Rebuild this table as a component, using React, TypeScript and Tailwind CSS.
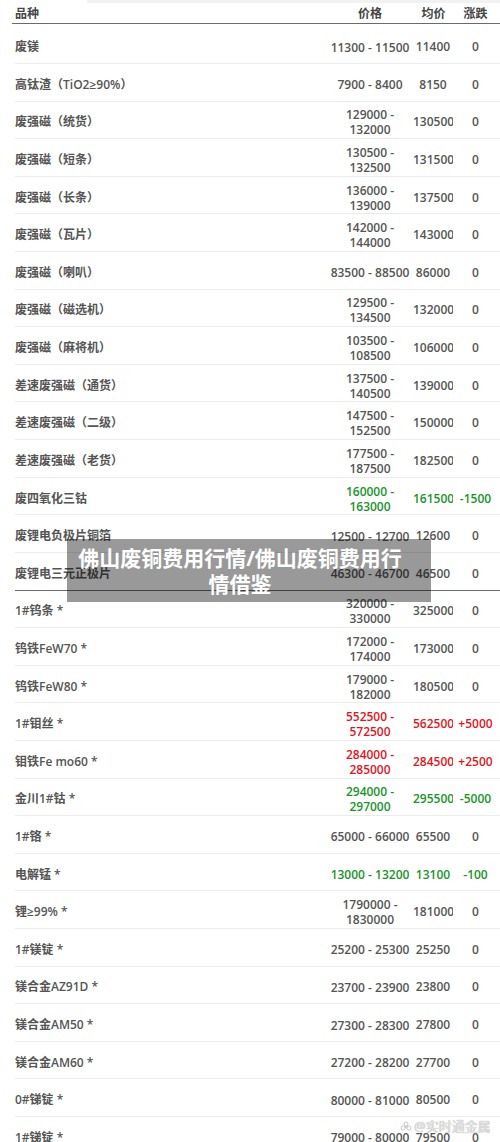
import React from 'react'

type Row = { name: string; price: string; avg: string; chg: string; tone?: 'up' | 'down'; strong?: boolean }

const rows: Row[] = [
  { name: '废镁', price: '11300 - 11500', avg: '11400', chg: '0' },
  { name: '高钛渣（TiO2≥90%）', price: '7900 - 8400', avg: '8150', chg: '0' },
  { name: '废强磁（统货）', price: '129000 - 132000', avg: '130500', chg: '0' },
  { name: '废强磁（短条）', price: '130500 - 132500', avg: '131500', chg: '0' },
  { name: '废强磁（长条）', price: '136000 - 139000', avg: '137500', chg: '0' },
  { name: '废强磁（瓦片）', price: '142000 - 144000', avg: '143000', chg: '0' },
  { name: '废强磁（喇叭）', price: '83500 - 88500', avg: '86000', chg: '0' },
  { name: '废强磁（磁选机）', price: '129500 - 134500', avg: '132000', chg: '0' },
  { name: '废强磁（麻将机）', price: '103500 - 108500', avg: '106000', chg: '0' },
  { name: '差速废强磁（通货）', price: '137500 - 140500', avg: '139000', chg: '0' },
  { name: '差速废强磁（二级）', price: '147500 - 152500', avg: '150000', chg: '0' },
  { name: '差速废强磁（老货）', price: '177500 - 187500', avg: '182500', chg: '0' },
  { name: '废四氧化三钴', price: '160000 - 163000', avg: '161500', chg: '-1500', tone: 'down' },
  { name: '废锂电负极片铜箔', price: '12500 - 12700', avg: '12600', chg: '0' },
  { name: '废锂电三元正极片', price: '46300 - 46700', avg: '46500', chg: '0', strong: true },
  { name: '1#钨条 *', price: '320000 - 330000', avg: '325000', chg: '0' },
  { name: '钨铁FeW70 *', price: '172000 - 174000', avg: '173000', chg: '0' },
  { name: '钨铁FeW80 *', price: '179000 - 182000', avg: '180500', chg: '0' },
  { name: '1#钼丝 *', price: '552500 - 572500', avg: '562500', chg: '+5000', tone: 'up' },
  { name: '钼铁Fe mo60 *', price: '284000 - 285000', avg: '284500', chg: '+2500', tone: 'up' },
  { name: '金川1#钴 *', price: '294000 - 297000', avg: '295500', chg: '-5000', tone: 'down' },
  { name: '1#铬 *', price: '65000 - 66000', avg: '65500', chg: '0' },
  { name: '电解锰 *', price: '13000 - 13200', avg: '13100', chg: '-100', tone: 'down' },
  { name: '锂≥99% *', price: '1790000 - 1830000', avg: '1810000', chg: '0' },
  { name: '1#镁锭 *', price: '25200 - 25300', avg: '25250', chg: '0' },
  { name: '镁合金AZ91D *', price: '23700 - 23900', avg: '23800', chg: '0' },
  { name: '镁合金AM50 *', price: '27300 - 28300', avg: '27800', chg: '0' },
  { name: '镁合金AM60 *', price: '27200 - 28200', avg: '27700', chg: '0' },
  { name: '0#锑锭 *', price: '80000 - 81000', avg: '80500', chg: '0' },
  { name: '1#锑锭 *', price: '79000 - 80000', avg: '79500', chg: '0' },
]

const toneClass = (t?: 'up' | 'down') =>
  t === 'up' ? 'text-[#e3141c]' : t === 'down' ? 'text-[#17952a]' : 'text-[#555]'

export default function App() {
  return (
    <div
      className="relative w-[500px] h-[1142px] overflow-hidden bg-white text-[12px] font-semibold"
      style={{ fontFamily: '"Open Sans", "Noto Sans CJK SC", sans-serif' }}
    >
      <div className="flex h-[3px]">
        <div className="w-[87px] bg-white" />
        <div className="flex-1 bg-[#f2f2f2]" />
      </div>

      <div className="ml-[12px] flex h-[21.4px] items-center border-b border-[#6b6b6b] pt-[2px] font-bold text-[#444]">
        <div className="flex-1 pl-[3px]">品种</div>
        <div className="w-[86px] text-center">价格</div>
        <div className="w-[41px] text-center">均价</div>
        <div className="w-[43px] text-center">涨跌</div>
        <div className="w-[3px]" />
      </div>

      <div className="mt-[2px]">
        {rows.map((r) => (
          <div
            key={r.name}
            className={`ml-[15px] flex h-[37.62px] items-center border-b pt-[5px] ${
              r.strong ? 'border-[#6b6b6b]' : 'border-[#ececec]'
            }`}
          >
            <div className="flex-1 text-[#555]">{r.name}</div>
            <div className={`w-[86px] text-center leading-[15px] ${toneClass(r.tone)}`}>{r.price}</div>
            <div className={`w-[40px] overflow-hidden whitespace-nowrap text-center ${toneClass(r.tone)}`}>{r.avg}</div>
            <div className={`ml-[1px] w-[43px] whitespace-nowrap text-center ${toneClass(r.tone)}`}>{r.chg}</div>
            <div className="w-[3px]" />
          </div>
        ))}
      </div>

      <div className="absolute left-[67px] top-[539px] flex h-[63px] w-[364px] items-center justify-center bg-black/40 pl-[10px] pr-[28px]">
        <p className="text-center text-[21px] font-bold leading-[26px] text-white">
          佛山废铜费用行情/佛山废铜费用行情借鉴
        </p>
      </div>

      <div className="absolute left-[400px] top-[1117px] flex items-center gap-[2px] text-[13px] font-normal text-[#e2e2e2] [text-shadow:0_0_1px_#999]">
        <svg width="12" height="12" viewBox="0 0 12 12" fill="none" stroke="#c9c9c9" strokeWidth="1">
          <circle cx="6" cy="3" r="2" />
          <circle cx="3" cy="7" r="2" />
          <circle cx="9" cy="7" r="2" />
          <circle cx="6" cy="6" r="1" />
        </svg>
        <span>@实时通金属</span>
      </div>
    </div>
  )
}
